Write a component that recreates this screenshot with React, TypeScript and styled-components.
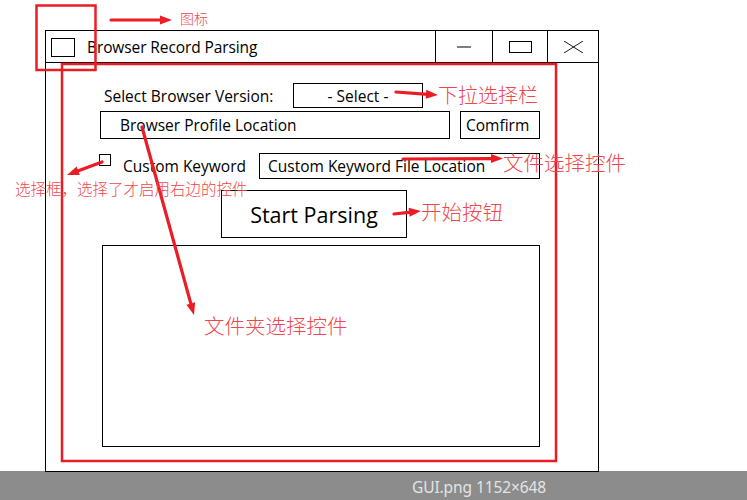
import React from 'react';
import styled, { createGlobalStyle } from 'styled-components';

const GlobalStyle = createGlobalStyle`
  html, body {
    margin: 0;
    padding: 0;
    background: #ffffff;
  }
  body {
    font-family: 'Open Sans', 'Noto Sans', sans-serif;
    color: #000000;
  }
`;

const RED = '#ec1c24';
const NOTE = '#ef474d';

const Viewer = styled.div`
  width: 747px;
  height: 500px;
  display: flex;
  flex-direction: column;
  overflow: hidden;
`;

const Stage = styled.div`
  position: relative;
  height: 471px;
  background: #ffffff;
  padding: 30px 0 0 45px;
  box-sizing: border-box;
`;

const Caption = styled.div`
  flex: 1;
  background: #8c8c8c;
  color: #e4e4e4;
  font-family: 'Noto Sans', 'Open Sans', sans-serif;
  font-size: 15.5px;
  letter-spacing: -0.1px;
  display: flex;
  align-items: center;
  padding: 3px 0 0 412px;
`;

const Window = styled.div`
  width: 554px;
  height: 442px;
  box-sizing: border-box;
  border: 1px solid #000;
  display: flex;
  flex-direction: column;
  background: #fff;
`;

const TitleBar = styled.div`
  height: 32px;
  box-sizing: border-box;
  border-bottom: 1px solid #000;
  display: flex;
  align-items: stretch;
`;

const AppIcon = styled.div`
  width: 24px;
  height: 19px;
  box-sizing: border-box;
  border: 1px solid #000;
  margin: 7px 0 0 5px;
`;

const Title = styled.div`
  flex: 1;
  font-size: 15.5px;
  line-height: 32px;
  padding-left: 12px;
  letter-spacing: -0.1px;
`;

const CtrlButton = styled.div<{ $w: number }>`
  width: ${p => p.$w}px;
  box-sizing: border-box;
  border-left: 1px solid #000;
  display: flex;
  align-items: center;
  justify-content: center;
`;

const Body = styled.div`
  flex: 1;
  display: flex;
  flex-direction: column;
  padding-top: 20px;
  font-size: 15.5px;
`;

const Row = styled.div<{ $indent: number; $gap?: number; $top?: number }>`
  display: flex;
  align-items: center;
  margin-left: ${p => p.$indent}px;
  margin-top: ${p => p.$top ?? 0}px;
  gap: ${p => p.$gap ?? 0}px;
`;

const Label = styled.span<{ $w: number }>`
  width: ${p => p.$w}px;
  flex: none;
  white-space: nowrap;
`;

const Field = styled.div<{ $w: number; $h: number; $pad?: number; $center?: boolean }>`
  width: ${p => p.$w}px;
  height: ${p => p.$h}px;
  flex: none;
  box-sizing: border-box;
  border: 1px solid #000;
  display: flex;
  align-items: center;
  justify-content: ${p => (p.$center ? 'center' : 'flex-start')};
  padding-left: ${p => p.$pad ?? 0}px;
  white-space: nowrap;
`;

const CheckBox = styled.div`
  width: 12px;
  height: 12px;
  flex: none;
  box-sizing: border-box;
  border: 1px solid #000;
  align-self: flex-start;
  margin-top: 1px;
`;

const StartButton = styled.div`
  width: 186px;
  height: 48px;
  box-sizing: border-box;
  border: 1px solid #000;
  display: flex;
  align-items: center;
  justify-content: center;
  font-size: 21.5px;
`;

const Output = styled.div`
  width: 438px;
  height: 202px;
  box-sizing: border-box;
  border: 1px solid #000;
`;

const Overlay = styled.svg`
  position: absolute;
  left: 0;
  top: 0;
  pointer-events: none;
`;

const Note = styled.span<{ $x: number; $y: number; $size: number }>`
  position: absolute;
  left: ${p => p.$x}px;
  top: ${p => p.$y}px;
  font-family: 'Noto Sans CJK SC', 'Noto Sans', sans-serif;
  font-weight: 300;
  font-size: ${p => p.$size}px;
  line-height: 1;
  color: ${NOTE};
  white-space: nowrap;
`;

type ArrowProps = { x1: number; y1: number; x2: number; y2: number };

const Arrow: React.FC<ArrowProps> = ({ x1, y1, x2, y2 }) => {
  const dx = x2 - x1;
  const dy = y2 - y1;
  const len = Math.hypot(dx, dy);
  const ux = dx / len;
  const uy = dy / len;
  const head = 12;
  const half = 4.5;
  const bx = x2 - ux * head;
  const by = y2 - uy * head;
  const px = -uy * half;
  const py = ux * half;
  return (
    <g>
      <line x1={x1} y1={y1} x2={bx + ux * 2} y2={by + uy * 2} stroke={RED} strokeWidth={3.2} strokeLinecap="round" />
      <polygon points={`${x2},${y2} ${bx + px},${by + py} ${bx - px},${by - py}`} fill={RED} />
    </g>
  );
};

const Annotations: React.FC = () => (
  <>
    <Overlay width={747} height={471}>
      <rect x={36.5} y={5.5} width={59} height={64.5} fill="none" stroke={RED} strokeWidth={2.5} />
      <rect x={62} y={64} width={494} height={397} fill="none" stroke={RED} strokeWidth={2.5} />
      <Arrow x1={111} y1={20} x2={172} y2={20} />
      <Arrow x1={396} y1={92} x2={438} y2={95} />
      <Arrow x1={403} y1={159} x2={503} y2={158.5} />
      <Arrow x1={102} y1={162} x2={67} y2={175} />
      <Arrow x1={142} y1={127} x2={194} y2={315} />
      <Arrow x1={394} y1={214} x2={421} y2={211} />
    </Overlay>
    <Note $x={180} $y={11} $size={14}>图标</Note>
    <Note $x={438} $y={85} $size={20}>下拉选择栏</Note>
    <Note $x={503} $y={152} $size={20.5}>文件选择控件</Note>
    <Note $x={15} $y={181} $size={15.5}>选择框，选择了才启用右边的控件</Note>
    <Note $x={204} $y={315} $size={20.5}>文件夹选择控件</Note>
    <Note $x={421} $y={201} $size={20.5}>开始按钮</Note>
  </>
);

const App: React.FC = () => {
  return (
    <Viewer>
      <GlobalStyle />
      <Stage>
        <Window>
          <TitleBar>
            <AppIcon />
            <Title>Browser Record Parsing</Title>
            <CtrlButton $w={57}>
              <svg width="14" height="2" viewBox="0 0 14 2">
                <line x1="0" y1="1" x2="14" y2="1" stroke="#000" strokeWidth="1" />
              </svg>
            </CtrlButton>
            <CtrlButton $w={55}>
              <svg width="23" height="12" viewBox="0 0 23 12">
                <rect x="0.5" y="0.5" width="22" height="11" fill="none" stroke="#000" strokeWidth="1" />
              </svg>
            </CtrlButton>
            <CtrlButton $w={51}>
              <svg width="19" height="12" viewBox="0 0 19 12">
                <line x1="0" y1="0" x2="19" y2="12" stroke="#000" strokeWidth="0.9" />
                <line x1="0" y1="12" x2="19" y2="0" stroke="#000" strokeWidth="0.9" />
              </svg>
            </CtrlButton>
          </TitleBar>
          <Body>
            <Row $indent={58}>
              <Label $w={189}>Select Browser Version:</Label>
              <Field $w={130} $h={25} $center>- Select -</Field>
            </Row>
            <Row $indent={54} $gap={10} $top={3}>
              <Field $w={350} $h={28} $pad={19}>Browser Profile Location</Field>
              <Field $w={80} $h={28} $pad={5}>Comfirm</Field>
            </Row>
            <Row $indent={53} $gap={12} $top={14}>
              <CheckBox />
              <Label $w={124}>Custom Keyword</Label>
              <Field $w={281} $h={26} $pad={8}>Custom Keyword File Location</Field>
            </Row>
            <Row $indent={175} $top={11}>
              <StartButton>Start Parsing</StartButton>
            </Row>
            <Row $indent={56} $top={7}>
              <Output />
            </Row>
          </Body>
        </Window>
        <Annotations />
      </Stage>
      <Caption>GUI.png 1152×648</Caption>
    </Viewer>
  );
};

export default App;
